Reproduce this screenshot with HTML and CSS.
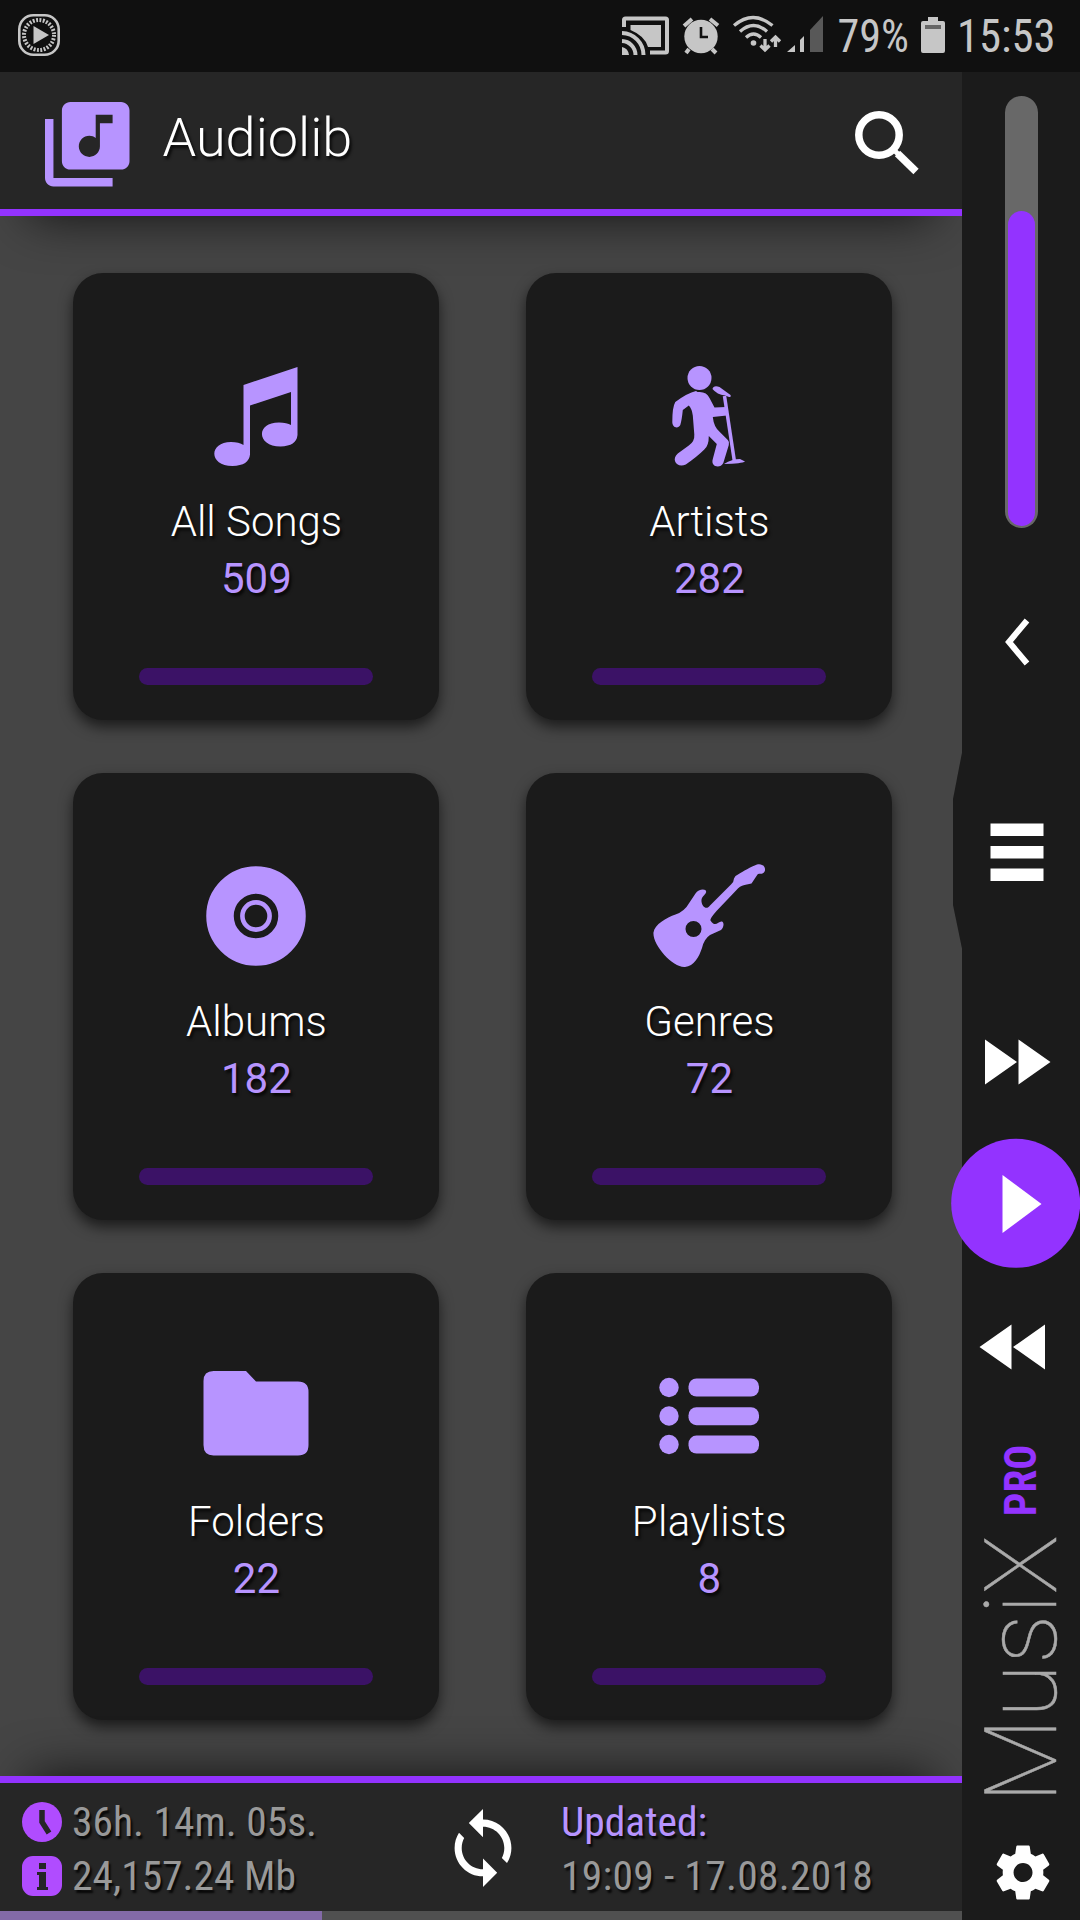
FILE: index.html
```html
<!DOCTYPE html>
<html lang="en">
<head>
<meta charset="utf-8">
<title>Audiolib</title>
<link rel="stylesheet" href="styles.css">
</head>
<body>
<div class="status">
  <svg class="status-app" width="42" height="42" viewBox="18 14 42 42"><rect x="19.3" y="15.3" width="39.4" height="39.4" rx="14" fill="none" stroke="#c6c6c6" stroke-width="2.6"/><circle cx="39" cy="35" r="15" fill="none" stroke="#c6c6c6" stroke-width="4" stroke-dasharray="1.9 1.466"/><path d="M33.5 26v18L49 35z" fill="#c6c6c6"/></svg>
  <svg class="status-icons" width="204" height="44" viewBox="620 14 204 44" fill="#c6c6c6">
    <path d="M624 27v-7q0-1.500 1.500-1.500h40q1.500 0 1.500 1.500v31q0 1.500-1.500 1.500H650" fill="none" stroke="#c6c6c6" stroke-width="4"/>
    <path d="M630.500 25H661v22h-13q-3-11-17.500-17z"/>
    <path d="M622 33a22 22 0 0 1 21.500 22M622 41a14 14 0 0 1 13.500 14" fill="none" stroke="#c6c6c6" stroke-width="4"/><path d="M622 47v8h7q-1-7-7-8z"/>
    <path d="M684 26l8-7M710 19l8 6.500M689 49l-3 4M712 49l4 4" stroke="#c6c6c6" stroke-width="4"/><circle cx="701" cy="36.500" r="16.700"/><path d="M701 27v10h7" fill="none" stroke="#101010" stroke-width="2.600"/>
    <g fill="none" stroke="#c6c6c6" stroke-width="3.300"><path d="M734 25.500q19-16 38.500 0M740 31.500q13.500-12 27 0M746 37.500q7.500-7 15 0M765 39v10M760.500 45.500l4.500 4.500 4.500-4.500M775.500 47V37M771 41.500l4.500-4.500 4.500 4.500"/></g><circle cx="753.500" cy="43" r="2.800"/>
    <path d="M787 52l8-7v7zM800 40l4-4v16h-4z"/><path d="M810 30l13-14v36h-13z" fill="#585858"/>
  </svg>
  <svg class="status-text" width="70" height="44" viewBox="0 0 70 44"><text x="-0.500" y="38" textLength="71.500" lengthAdjust="spacingAndGlyphs">79%</text></svg>
  <svg class="status-battery" width="24" height="36" viewBox="0 0 24 36"><path d="M7 0h10v4h5q2 0 2 2v28q0 2-2 2H2q-2 0-2-2V6q0-2 2-2h5z" fill="#c6c6c6"/><path d="M4 8h16v4H4z" fill="#666"/></svg>
  <svg class="status-text status-clock" width="96" height="44" viewBox="0 0 96 44"><text x="-3" y="38" textLength="98.500" lengthAdjust="spacingAndGlyphs">15:53</text></svg>
</div>
<div class="app">
  <main class="library">
    <header class="header">
      <svg class="logo" width="84.500" height="84.500" viewBox="2 2 20 20"><path fill="#b794ff" d="M20 2H8c-1.100 0-2 .9-2 2v12c0 1.100.9 2 2 2h12c1.100 0 2-.9 2-2V4c0-1.100-.9-2-2-2zm-2 5h-3v5.500c0 1.380-1.120 2.500-2.500 2.500S10 13.880 10 12.500s1.120-2.500 2.500-2.500c.57 0 1.080.19 1.500.51V5h4v2zM4 6H2v14c0 1.100.9 2 2 2h14v-2H4V6z"/></svg>
      <h1 class="title">Audiolib</h1>
      <svg class="search" width="66" height="66" viewBox="854 110 66 66" fill="none" stroke="#fff"><circle cx="879" cy="135" r="20.200" stroke-width="7.500"/><path d="M893 149l5 5" stroke-width="5"/><path d="M897.500 153.500l18.500 18" stroke-width="7.500"/></svg>
    </header>
    <section class="grid">
      <article class="card">
        <svg class="card-icon" width="120" height="110" viewBox="76.500 100 120 110"><path fill="#b794ff" d="M124 125l54-18v68q-1 11-17 11.500c-24 0-25-24-1.500-24q8 0 12 2.500v-33l-41 13.500v49q-1 11-17.500 11.500c-24 0-24-24-1.500-24q8 0 12.500 3z"/></svg>
        <h2 class="card-name">All Songs</h2><p class="card-count">509</p><div class="card-bar"></div>
      </article>
      <article class="card">
        <svg class="card-icon" width="120" height="110" viewBox="138.500 100 120 110" fill="#b794ff"><circle cx="189" cy="118" r="12"/><path d="M187 132q9-1 12 6l5 9.500 11.500-.5.800 8.500-14 1.500q1 10 7 15l8 8q2 2 1 5l-5.500 18c-3 6-13 4-10.500-4l4-15-8-8q0 10-4.500 13.500-7 7-18.500 15c-9 4-15-5-8-11l11-8q6-4 5.500-11l-1.500-19q-1-7-4-10l-6 4.500q-1 10-2.500 15c-2 4-8 3-8-3q0-15 3-20 12-9 20.700-11z"/><path d="M202 129q1-4 7-2l11 8q1 2-1.500 2l-4-1.500q-8-1-12.500-6.500z"/><path d="M214 136l10 66" stroke="#b794ff" stroke-width="3.500"/><path d="M213.500 204q8-5 16-5l5 2.500q-3 2-21 2.500z"/></svg>
        <h2 class="card-name">Artists</h2><p class="card-count">282</p><div class="card-bar"></div>
      </article>
      <article class="card">
        <svg class="card-icon" width="120" height="110" viewBox="136 100 120 110"><circle cx="196" cy="156" r="36" fill="none" stroke="#b794ff" stroke-width="27.500"/><circle cx="196" cy="156" r="13.600" fill="none" stroke="#b794ff" stroke-width="4.600"/></svg>
        <h2 class="card-name">Albums</h2><p class="card-count">182</p><div class="card-bar"></div>
      </article>
      <article class="card">
        <svg class="card-icon" width="120" height="110" viewBox="138.500 99.500 120 110"><path fill="#b794ff" fill-rule="evenodd" d="M143 172c1-8 13-15 22-18q9-3 14-12l6-9c3-5 12-5 10.500-1-1 3-5 4-4.500 9 .5 5 5 9 8.500 4l21-21q3-3 3-6 1-3 4-4c5-3 13-8 19-10 7-2 11 6 5.500 9-2 1-4-.5-5 1l-6 9-7 1.500q-5 1-8 5l-20 21q-7 8-6 9.500c5 8 8 0 11.500 1 3 2 1 7-1 8.500l-11 5q-6 4-8 13c-3 9-8 18-17 19-12 1-33-22-31.500-35zM183 160.500a8 8 0 1 0 0 16 8 8 0 1 0 0-16z"/></svg>
        <h2 class="card-name">Genres</h2><p class="card-count">72</p><div class="card-bar"></div>
      </article>
      <article class="card">
        <svg class="card-icon" width="120" height="110" viewBox="136 100 120 110"><path fill="#b794ff" d="M153.500 111H186l10 10.500h42q10.500 0 10.500 10.500v53q0 10.500-10.500 10.500h-84.500q-10 0-10-10.500v-64q0-10 10-10z"/></svg>
        <h2 class="card-name">Folders</h2><p class="card-count">22</p><div class="card-bar"></div>
      </article>
      <article class="card">
        <svg class="card-icon" width="120" height="110" viewBox="139 100 120 110" fill="#b794ff"><circle cx="159" cy="127.500" r="9.700"/><circle cx="159" cy="156" r="9.700"/><circle cx="159" cy="184.500" r="9.700"/><rect x="178.500" y="118.500" width="70.500" height="18" rx="8"/><rect x="178.500" y="147.200" width="70.500" height="18" rx="8"/><rect x="178.500" y="175.600" width="70.500" height="18" rx="8"/></svg>
        <h2 class="card-name card-name-wide">Playlists</h2><p class="card-count">8</p><div class="card-bar"></div>
      </article>
    </section>
    <footer class="footer">
      <div class="facts">
        <div class="fact"><svg width="40" height="40" viewBox="0 0 40 40"><circle cx="20" cy="20" r="20" fill="#b04cff"/><path d="M20 8v12l7 11" fill="none" stroke="#262626" stroke-width="5.500"/></svg><span class="condensed">36h. 14m. 05s.</span></div>
        <div class="fact"><svg width="40" height="40" viewBox="0 0 40 40"><rect width="40" height="40" rx="11" fill="#b04cff"/><path d="M17 7h7v6h-7zM15 16h9v15h2v3H15v-3h2V19h-2z" fill="#262626"/></svg><span class="condensed">24,157.24 Mb</span></div>
      </div>
      <svg class="sync" width="60" height="80" viewBox="3.550 .75 16.900 22.530"><path fill="#fff" d="M12 4V1L8 5l4 4V6c3.310 0 6 2.690 6 6 0 1.010-.25 1.970-.7 2.800l1.460 1.460C19.540 15.030 20 13.570 20 12c0-4.420-3.580-8-8-8zm0 14c-3.310 0-6-2.690-6-6 0-1.010.25-1.970.7-2.800L5.240 7.740C4.460 8.970 4 10.430 4 12c0 4.420 3.580 8 8 8v3l4-4-4-4v3z"/></svg>
      <div class="updated"><div class="condensed updated-label">Updated:</div><div class="condensed updated-date">19:09 - 17.08.2018</div></div>
    </footer>
    <div class="progress"><div class="progress-fill"></div></div>
  </main>
  <aside class="sidebar">
    <svg class="handle" width="12" height="204" viewBox="0 0 12 204"><path d="M12 2h-1.500L1 51v106l9.500 46H12z" fill="#1b1b1b"/></svg>
    <div class="volume"><div class="volume-level"></div></div>
    <svg width="118" height="168" viewBox="962 558 118 168"><path d="M1027 620.500l-18 21.500 18 21.500" fill="none" stroke="#fff" stroke-width="6"/></svg>
    <svg width="118" height="252" viewBox="962 726 118 252"><path d="M990.500 823.500h53V836h-53zM990.500 846h53v12.500h-53zM990.500 868.500h53V881h-53z" fill="#fff"/></svg>
    <svg width="118" height="160" viewBox="962 978 118 160"><path d="M985 1039.500v45l32-22.500zM1018.500 1039.500v45l32-22.500z" fill="#fff"/></svg>
    <svg width="118" height="130" viewBox="962 1138 118 130"><circle cx="1015.700" cy="1203.300" r="64.500" fill="#9333ff"/><path d="M1002.500 1175v58l39-29z" fill="#fff"/></svg>
    <svg width="118" height="160" viewBox="962 1268 118 160"><path d="M1011.500 1324.500v45l-32-22.500zM1045 1324.500v45l-32-22.500z" fill="#fff"/></svg>
    <svg class="brand" width="118" height="400" viewBox="0 0 118 400"><g transform="translate(0 400) rotate(-90)"><text class="brand-name" x="25" y="94" textLength="268" lengthAdjust="spacingAndGlyphs">MusiX</text><text class="brand-tier" x="312" y="74" textLength="71" lengthAdjust="spacingAndGlyphs">PRO</text></g></svg>
    <svg width="118" height="92" viewBox="962 1828 118 92"><path fill="#fff" transform="translate(990.500 1840) scale(2.710)" d="M19.430 12.980c.04-.32.070-.64.070-.98s-.03-.66-.07-.98l2.110-1.650c.19-.15.240-.42.120-.64l-2-3.460c-.12-.22-.39-.3-.61-.22l-2.490 1c-.52-.4-1.080-.73-1.690-.98l-.38-2.650C14.460 2.180 14.250 2 14 2h-4c-.25 0-.46.180-.49.420l-.38 2.650c-.61.250-1.170.590-1.690.98l-2.490-1c-.23-.09-.49 0-.61.220l-2 3.460c-.13.220-.07.490.12.640l2.110 1.650c-.04.320-.07.650-.07.980s.03.660.07.980l-2.110 1.650c-.19.150-.24.420-.12.640l2 3.460c.12.220.39.300.61.220l2.490-1c.52.400 1.080.730 1.690.98l.38 2.650c.03.240.24.420.49.420h4c.25 0 .46-.18.490-.42l.38-2.650c.61-.25 1.170-.59 1.690-.98l2.490 1c.23.090.49 0 .61-.22l2-3.460c.12-.22.070-.49-.12-.64l-2.110-1.650zM12 15.500c-1.930 0-3.500-1.570-3.500-3.500s1.570-3.500 3.500-3.500 3.500 1.570 3.500 3.500-1.570 3.500-3.500 3.500z"/></svg>
  </aside>
</div>
</body>
</html>
```
FILE: styles.css
```css
* { box-sizing: border-box; margin: 0; padding: 0; }
body { width: 1080px; height: 1920px; overflow: hidden; background: #454545; font-family: Roboto, sans-serif; }
svg { display: block; flex: none; }

.status { height: 72px; background: #101010; display: flex; align-items: flex-start; padding: 14px 26px 0 18px; }
.status-icons { margin-left: 560px; }
.status-text { margin-left: 14px; overflow: visible; fill: #c6c6c6; font-size: 45.5px; font-stretch: 75%; }
.status-battery { margin: 3px 0 0 13px; }
.status-clock { margin-left: 15px; }

.app { display: flex; height: 1848px; }
.library { width: 962px; display: flex; flex-direction: column; }

.header { height: 144px; flex: none; background: #262626; border-bottom: 7px solid #9333ff; display: flex; align-items: flex-start; padding: 30px 42px 0 45px; box-shadow: 0 30px 50px -30px rgba(0, 0, 0, .75); }
.title { margin: 4px auto 0 33px; font-size: 54px; font-weight: 300; line-height: 64px; color: #fff; text-shadow: 2px 3px 3px rgba(0, 0, 0, .8); }
.search { margin-top: 8px; }

.grid { flex: 1; display: grid; grid-template-columns: 366px 366px; grid-auto-rows: 447px; gap: 53px 87px; padding: 56.5px 0 0 73.4px; }
.card { background: #1b1b1b; border-radius: 30px; display: flex; flex-direction: column; align-items: center; padding-top: 87px; box-shadow: 0 7px 14px rgba(0, 0, 0, .6); }
.card-icon { overflow: visible; }
.card-name, .card-count { font-size: 42px; line-height: 56.5px; text-shadow: 2px 3px 3px rgba(0, 0, 0, .8); }
.card-name { margin-top: 24px; font-weight: 300; color: #fff; }
.card-name-wide { letter-spacing: .3px; }
.card-count { margin-top: 1px; font-weight: 400; color: #b794ff; }
.card-bar { width: 234px; height: 17px; margin-top: 60px; border-radius: 9px; background: #3b1266; }

.footer { height: 135px; flex: none; background: #262626; border-top: 7px solid #9333ff; display: flex; padding-left: 22px; box-shadow: 0 -30px 50px -30px rgba(0, 0, 0, .75); }
.facts { width: 431px; padding-top: 12px; }
.fact { display: flex; align-items: center; gap: 10px; height: 54px; }
.condensed { font-size: 41.5px; line-height: 54px; font-stretch: 75%; color: #999; white-space: nowrap; text-shadow: 2px 3px 2px rgba(0, 0, 0, .8); }
.sync { margin-top: 25px; }
.updated { padding: 12px 0 0 48px; }
.updated-label { color: #b794ff; }
.updated-date { letter-spacing: .3px; }
.progress { height: 9px; flex: none; background: #505050; }
.progress-fill { width: 322px; height: 9px; background: #836aa7; }

.sidebar { width: 118px; background: #1b1b1b; position: relative; padding-top: 24px; }
.sidebar > svg { overflow: visible; }
.sidebar .handle { position: absolute; left: -10.5px; top: 676px; }
.volume { width: 33px; height: 432px; margin: 0 0 30px 43px; border-radius: 17px; background: #686868; padding: 115px 3px 2px; }
.volume-level { height: 315px; border-radius: 14px; background: #9333ff; }
.brand-name { font-size: 101px; font-weight: 100; fill: #aaa; stroke: #aaa; stroke-width: .5px; }
.brand-tier { font-size: 44px; font-weight: 700; font-stretch: 75%; fill: #9333ff; }
```
